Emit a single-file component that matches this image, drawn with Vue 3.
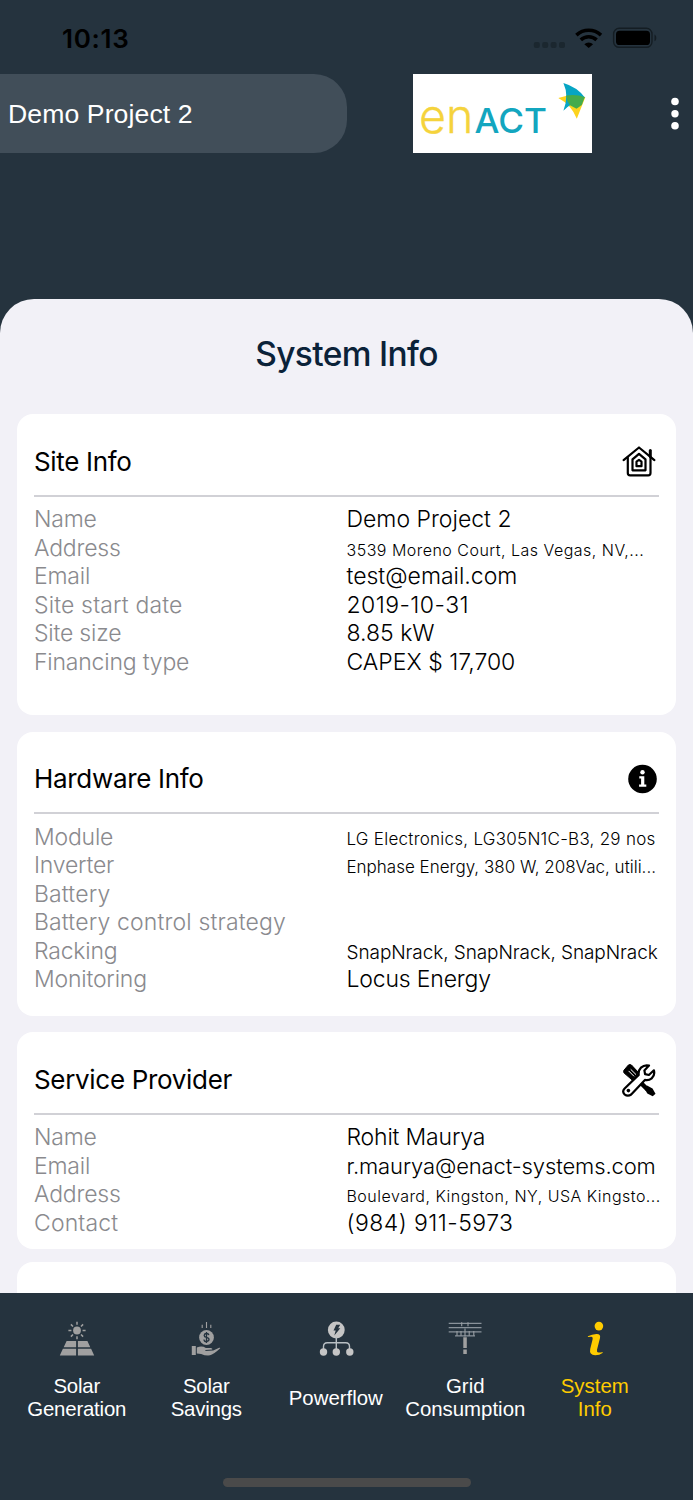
<script setup>
const cards = [
  {
    title: 'Site Info', icon: 'home', cls: 'site',
    rows: [
      ['Name', 'Demo Project 2', ''],
      ['Address', '3539 Moreno Court, Las Vegas, NV,...', 'xs'],
      ['Email', 'test@email.com', ''],
      ['Site start date', '2019-10-31', 'digits', 'wide'],
      ['Site size', '8.85 kW', ''],
      ['Financing type', 'CAPEX $ 17,700', ''],
    ],
  },
  {
    title: 'Hardware Info', icon: 'info', cls: 'hardware',
    rows: [
      ['Module', 'LG Electronics, LG305N1C-B3, 29 nos', 'sm open'],
      ['Inverter', 'Enphase Energy, 380 W, 208Vac, utili...', 'sm'],
      ['Battery', '', '', 'wide'],
      ['Battery control strategy', '', '', 'wide'],
      ['Racking', 'SnapNrack, SnapNrack, SnapNrack', 'md'],
      ['Monitoring', 'Locus Energy', 'snug'],
    ],
  },
  {
    title: 'Service Provider', icon: 'tools', cls: 'provider',
    rows: [
      ['Name', 'Rohit Maurya', 'snug'],
      ['Email', 'r.maurya@enact-systems.com', 'lg'],
      ['Address', 'Boulevard, Kingston, NY, USA Kingsto...', 'xs'],
      ['Contact', '(984) 911-5973', 'digits', 'wide'],
    ],
  },
]

const tabs = [
  { lines: ['Solar', 'Generation'], icon: 'solar' },
  { lines: ['Solar', 'Savings'], icon: 'savings' },
  { lines: ['Powerflow'], icon: 'flow' },
  { lines: ['Grid', 'Consumption'], icon: 'grid' },
  { lines: ['System', 'Info'], icon: 'i', active: true },
]
</script>

<template>
  <div class="screen">
    <div class="status">
      <span class="time">10:13</span>
      <svg class="signals" width="124" height="24" viewBox="0 0 124 24">
        <g fill="#1b272f">
          <rect x="0.8" y="15" width="6" height="6" rx="2" />
          <rect x="9.2" y="15" width="6" height="6" rx="2" />
          <rect x="17.6" y="15" width="6" height="6" rx="2" />
          <rect x="26" y="15" width="6" height="6" rx="2" />
        </g>
        <g fill="none" stroke="#000" stroke-width="3.6">
          <path d="M43.4 8.1a18.200 18.200 0 0 1 24.600 0" />
          <path d="M47.800 12.900a11.600 11.600 0 0 1 15.800 0" />
        </g>
        <path d="M51.300 17.300a6.600 6.600 0 0 1 8.800 0L55.700 21z" fill="#000" />
        <rect x="80.600" y="1.3" width="38.400" height="19" rx="5.600" fill="none" stroke="#141d23" stroke-width="1.4" />
        <rect x="83" y="3.800" width="34" height="14.200" rx="3.600" fill="#000" />
        <path d="M121.500 7.400c2.400 1.200 2.400 5.600 0 6.800z" fill="#141d23" />
      </svg>
    </div>

    <header class="header">
      <div class="project">Demo Project 2</div>
      <svg class="logo" width="179" height="79" viewBox="0 0 179 79">
        <rect width="179" height="79" fill="#fff" />
        <text class="logo-en" x="6" y="58.500" textLength="54.500" lengthAdjust="spacingAndGlyphs">en</text>
        <text class="logo-act" x="61.500" y="58.500" textLength="72.500" lengthAdjust="spacingAndGlyphs">ACT</text>
        <path d="M145.300 24l16-4.200 11 3.400-8.500 21.500q-5.600-14-18.500-20.700z" fill="#fcd31e" />
        <path d="M150.400 9Q164 13 171.800 23.400 159 28 150.400 36.700 156.300 22 150.400 9z" fill="#06a5c4" />
        <path d="M153.100 21.500q10-1.500 18.700 1.500l-3 8-5.300 3.800-6.500-3.600q-3.500-4.500-3.900-9.700z" fill="#45ab4c" />
      </svg>
      <svg class="dots" width="10" height="34" viewBox="0 0 10 34" fill="#fff">
        <circle cx="5" cy="4.500" r="3.800" /><circle cx="5" cy="16.700" r="3.700" /><circle cx="5" cy="28.800" r="3.800" />
      </svg>
    </header>

    <main class="sheet">
      <h1>System Info</h1>
      <section v-for="card in cards" :key="card.title" class="card" :class="card.cls">
        <div class="card-head">
          <h2>{{ card.title }}</h2>
          <svg v-if="card.icon === 'home'" width="36" height="36" viewBox="0 0 36 36" fill="none" stroke="#000" stroke-width="2.200" stroke-linejoin="round" stroke-linecap="round">
            <path d="M2.600 16.100L18 3.500l15.400 12.600" />
            <path d="M6.800 13.500V29q0 2.300 2.300 2.300H27.200q2.300 0 2.300-2.300V13.500" />
            <path d="M29.300 6.500v6" stroke-width="3" />
            <path d="M11.500 26.300V15.400L18 9.800l6.500 5.600v10.900z" />
            <path d="M15.500 22.200v-4.500l2.500-1.800 2.500 1.800v4.500z" />
          </svg>
          <svg v-else-if="card.icon === 'info'" width="36" height="36" viewBox="0 0 36 36">
            <circle cx="21.500" cy="18" r="14.300" fill="#000" />
            <circle cx="21.500" cy="11.300" r="2.200" fill="#fff" />
            <path d="M18.300 15.300h5v8.200h2v2.300h-7.200v-2.300h2v-5.900h-1.800z" fill="#fff" />
          </svg>
          <svg v-else width="36" height="36" viewBox="0 0 36 36">
            <path d="M3 8.200L7.300 3.100q1.700-1.300 3.400.2L18 11l-6.500 7.300L3.100 11q-1-1.400-.1-2.800z" fill="#000" stroke="#000" stroke-linejoin="round" />
            <path d="M7.600 8.900l5.400 5.400M9.700 7.300l5.300 5.300" stroke="#fff" stroke-width="1" />
            <path d="M17 18l9.500 9.500" stroke="#000" stroke-width="4.500" />
            <path d="M26 23.500l5.500 2.900 3 5.300-2.800 2.500-5.400-2.700-3-5.200z" fill="#000" />
            <path d="M3.400 26.800L17.700 12.900q-.5-4.600 2.300-7.300 3.500-3.200 8-2l-4.600 4.800.7 3.800 3.800.8 5-4.700q1.300 5-2.200 8-2.900 2.400-6.800 1.600L10.200 32.500q-3.400 2.400-6.700-.1-2.600-3-.1-5.600z" fill="#fff" stroke="#000" stroke-width="2.200" stroke-linejoin="round" />
            <circle cx="7.400" cy="28.600" r="1.800" fill="#000" />
          </svg>
        </div>
        <dl>
          <div v-for="row in card.rows" :key="row[0]" class="row">
            <dt :class="row[3]">{{ row[0] }}</dt>
            <dd :class="row[2]">{{ row[1] }}</dd>
          </div>
        </dl>
      </section>
      <section class="card next"></section>
    </main>

    <nav class="tabs">
      <div v-for="tab in tabs" :key="tab.icon" class="tab" :class="[tab.icon, { active: tab.active }]">
        <svg v-if="tab.icon === 'solar'" width="36" height="36" viewBox="0 0 36 36" fill="#a0a0a0">
          <circle cx="18" cy="9.500" r="3.900" />
          <path d="M18 .8v3M18 15.200v3M9.400 9.500h3M23.600 9.500h3M11.900 3.400L14 5.500M22 13.500l2.100 2.100M24.100 3.400L22 5.500M14 13.500l-2.100 2.100" stroke="#a0a0a0" stroke-width="1.500" />
          <path d="M7.600 20h9.500v6.200H4.700zM18.900 20h9.500l2.900 6.200H18.900zM3.900 27.800h13.200v6.600H.8zM18.900 27.800h13.200l3.100 6.600H18.900z" />
        </svg>
        <svg v-else-if="tab.icon === 'savings'" width="36" height="36" viewBox="0 0 36 36" fill="#a0a0a0">
          <path d="M18.500 .9v6M14.200 3.700v3.200M22.800 3.700v3.200" stroke="#a0a0a0" stroke-width="1.100" />
          <circle cx="18.500" cy="16.500" r="7.400" />
          <path d="M20.900 14.200q-.3-1.700-2.400-1.700t-2.300 1.900q0 1.500 2.300 2 2.500.5 2.500 2.200T18.500 20.500t-2.500-1.900M18.500 10.900v11.200" fill="none" stroke="#25333e" stroke-width="1.300" />
          <path d="M3.800 25h4v9h-4zM8.800 26.500q5-2.300 9 .4h5.200q2 .5 1.200 1.700l-6.800.5v.8l7.800-.3 6-2.900q1.600-.3.800.9-6.600 6.100-10 6.700-4.600.5-8.900-1.400l-4.300-.3z" />
        </svg>
        <svg v-else-if="tab.icon === 'flow'" width="36" height="36" viewBox="0 0 36 36">
          <circle cx="18.300" cy="9" r="8.400" fill="#c5c5c5" />
          <path d="M18.300 16v13M5.500 30v-4.500q0-3.800 3.800-3.800h18.400q3.800 0 3.800 3.800V30" fill="none" stroke="#b8bfc3" stroke-width="1.400" />
          <circle cx="5.500" cy="31" r="3.700" fill="#c5c5c5" /><circle cx="18.300" cy="31" r="3.700" fill="#c5c5c5" /><circle cx="31.800" cy="31" r="3.700" fill="#c5c5c5" />
          <path d="M18.200 3.800h4l-2 3.400h2.100l-6 7.300 1.400-4.900h-2.200z" fill="#25333e" />
        </svg>
        <svg v-else-if="tab.icon === 'grid'" width="36" height="36" viewBox="0 0 36 36">
          <path d="M1.700 2.400h32.800M1.700 6.600h32.800M1.700 10.800h32.800M8 14.800h20" stroke="#89929a" stroke-width="1.200" />
          <path d="M14.700 1.200v4M21 1.200v4M10 10v4.800M14 10v4.800M22.200 10v4.800M26.800 10v4.800M18 7.500v8" stroke="#999fa4" stroke-width="1.100" />
          <path d="M16.300 16.300h3.500V27h-3.500zM16.300 28.500h3.500V33h-3.500z" fill="#a0a0a0" />
        </svg>
        <svg v-else width="36" height="36" viewBox="0 0 36 36" fill="#fc0">
          <circle cx="21.900" cy="5.100" r="4.300" />
          <path d="M10.900 15.200q4-2 8.500-2.200 4.500-.2 3.600 3.900l-3 11.800q-.5 2.600 1.500 2.900 2 .1 4.200-.6l-.2 1q-3 2.200-7.300 2.200-6.200-.2-5-6.200l2.300-9.300q.7-2.900-1.300-2.900-1.600 0-3.300.3z" />
        </svg>
        <div class="tab-label"><span v-for="line in tab.lines" :key="line">{{ line }}</span></div>
      </div>
      <div class="home-bar"></div>
    </nav>
  </div>
</template>

<style>
body { margin: 0; background: #25333e; }
</style>

<style scoped>
.screen {
  width: 693px;
  height: 1500px;
  overflow: hidden;
  display: flex;
  flex-direction: column;
  background: #25333e;
  font-family: Inter, "Liberation Sans", sans-serif;
  color: #000;
}
.status {
  height: 74px;
  flex: none;
  box-sizing: border-box;
  padding: 25px 36px 0 62px;
  display: flex;
  justify-content: space-between;
  align-items: flex-start;
}
.time { font-size: 26px; line-height: 28px; font-weight: 600; letter-spacing: 0.7px; }
.signals { margin-top: 2px; }
.header {
  height: 224.500px;
  flex: none;
  display: flex;
  align-items: flex-start;
}
.project {
  box-sizing: border-box;
  width: 346.500px;
  height: 78.500px;
  padding-left: 8px;
  border-radius: 0 33px 33px 0;
  background: #414e59;
  color: #fff;
  font: 26.600px/81px "Liberation Sans", sans-serif;
  letter-spacing: 0.100px;
}
.logo { margin-left: 66.500px; }
.logo-en { font: 300 47px Inter, sans-serif; fill: #f5d33c; stroke: #f5d33c; stroke-width: 0.300px; }
.logo-act { font: 500 34.500px Inter, sans-serif; fill: #13a6bf; }
.dots { margin: 23px 0 0 78.300px; }
.sheet {
  height: 994px;
  flex: none;
  overflow: hidden;
  box-sizing: border-box;
  padding: 0 17px;
  border-radius: 34px 34px 0 0;
  background: #f2f1f7;
}
h1 {
  margin: 0;
  height: 115.500px;
  font-size: 33.500px;
  line-height: 110px;
  font-weight: 550;
  letter-spacing: -0.650px;
  text-align: center;
  color: #0b2239;
}
.card {
  box-sizing: border-box;
  padding: 0 17px;
  border-radius: 16px;
  background: #fff;
}
.site { height: 301px; margin-bottom: 16.500px; }
.hardware { height: 284.500px; margin-bottom: 16px; }
.provider { height: 217px; margin-bottom: 12.500px; }
.next { height: 80px; }
.card-head {
  box-sizing: border-box;
  height: 82.500px;
  padding: 15px 2px 0 0;
  border-bottom: 2px solid #d1d1d6;
  display: flex;
  justify-content: space-between;
  align-items: center;
}
h2 { margin: 0; font-size: 26px; line-height: 34px; font-weight: 400; letter-spacing: -0.320px; }
dl { margin: 8.500px 0 0; }
.row { display: flex; height: 28.500px; line-height: 28.500px; white-space: nowrap; }
dt { width: 312.500px; flex: none; font-size: 23px; font-weight: 300; color: #8a8a8e; letter-spacing: -0.200px; }
dt.wide { letter-spacing: 0.150px; }
dd { margin: 0; font-size: 23px; font-weight: 300; }
dd.digits { letter-spacing: 0.450px; }
dd.snug { letter-spacing: -0.180px; }
dd.lg { font-size: 22px; letter-spacing: -0.120px; }
dd.md { font-size: 19px; line-height: 31px; letter-spacing: -0.080px; }
dd.sm { font-size: 17px; line-height: 33px; }
dd.open { letter-spacing: 0.260px; }
dd.xs { font-size: 16px; line-height: 33px; letter-spacing: 0.480px; }
.tabs {
  position: relative;
  height: 207.500px;
  flex: none;
  box-sizing: border-box;
  padding: 28.500px 34px 0 12px;
  display: grid;
  grid-template-columns: repeat(5, 129.500px);
  align-items: start;
}
.tab {
  display: flex;
  flex-direction: column;
  align-items: center;
  color: #fff;
  font: 20.400px/23px "Liberation Sans", sans-serif;
}
.tab.solar, .tab.savings { letter-spacing: -0.200px; }
.tab.active { color: #fc0; }
.tab-label {
  height: 46px;
  margin-top: 18px;
  display: flex;
  flex-direction: column;
  align-items: center;
  justify-content: center;
}
.home-bar {
  position: absolute;
  left: 222.500px;
  bottom: 13.500px;
  width: 248px;
  height: 8.500px;
  border-radius: 5px;
  background: #4a4a4a;
}
</style>
